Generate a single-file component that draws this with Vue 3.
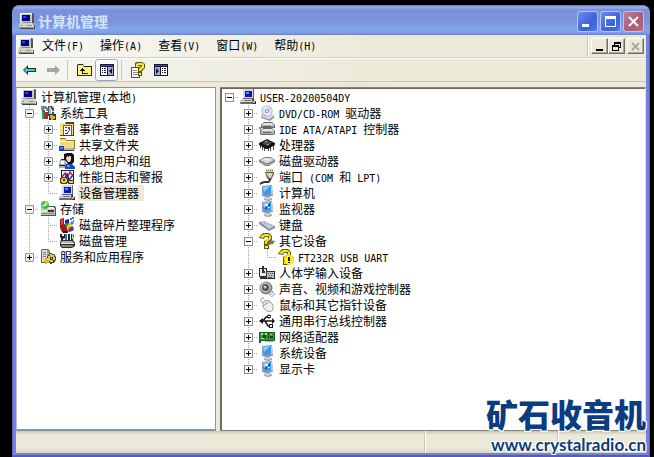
<template>
  <div class="desktop">
    <svg class="sprite" aria-hidden="true">
      <symbol id="pc" viewBox="0 0 16 16">
        <path fill="#55554f" d="M3 0h11l1 1v9H3z" />
        <path fill="#c8c8c0" d="M1 0h12v10H1z" />
        <path fill="#fff" d="M1 0h12v1H2v8H1z" />
        <path fill="#00008c" d="M3 2h8v6H3z" />
        <path fill="#2848e0" d="M4 3h3v2H4z" />
        <path fill="#888" d="M4 9h8v1H4z" />
        <path fill="#44443f" d="M2 11h12l2 2v3H1z" />
        <path fill="#d4d4cc" d="M1 10h12l2 2v3H0v-3z" />
        <path fill="#94948c" d="M0 14h14v1H0zM8 12h5v1H8z" />
        <path fill="#20a020" d="M2 12h1v1H2z" />
      </symbol>
      <symbol id="tools" viewBox="0 0 16 16">
        <path fill="#708890" d="M1 1h5l2 2v3H6V4H4v2H2L1 4z" />
        <path fill="#506060" d="M2 5h3v9H2zM9 4h2v5H9z" />
        <path fill="#28a060" d="M2 7h2v7H2z" />
        <path fill="#c82020" d="M5 7h3v7H5z" />
        <path fill="#485858" d="M8 1h4l2 2v3h-2V4h-2v7H8z" />
        <path fill="#a0c8d8" d="M9 2h2v8H9z" />
        <path fill="#383020" d="M9 9h7v6H9z" />
        <path fill="#e0b020" d="M10 10h3v1h2v3h-2v1h-2v-2h-1z" />
        <path fill="#2050b0" d="M12 7h2v2h-2z" />
      </symbol>
      <symbol id="events" viewBox="0 0 16 16">
        <path fill="#4c4420" d="M1 2h5l1-1h8v14H1z" />
        <path fill="#f0e088" d="M1 2h5l1 1h7v11H1z" />
        <path fill="#fff" d="M4 4h9v10H4z" />
        <path fill="#606060" d="M4 4h9v1H5v9H4zM12 5h1v9h-1z" />
        <path fill="#2030a0" d="M6 6h2v1H6zM6 9h2v1H6zM6 12h2v1H6z" />
        <path fill="#a02060" d="M9 6h2v4H9v3H8v-2h2V8H9z" />
      </symbol>
      <symbol id="shared" viewBox="0 0 16 16">
        <path fill="#8c7c20" d="M1 1h5l2 2h8v9H1z" />
        <path fill="#f0dc78" d="M1 2h5l2 2h7v7H1z" />
        <path fill="#fff8b8" d="M1 4h13v1H1z" />
        <path fill="#1840a8" d="M0 9h5v5H0z" />
        <path fill="#404030" d="M5 13h10v1H5z" />
        <path fill="#a8b8c0" d="M5 11h8l3 1v1H5z" />
        <path fill="#4888d8" d="M1 10h3v2H1z" />
      </symbol>
      <symbol id="users" viewBox="0 0 16 16">
        <path fill="#101010" d="M5 1l3-1h5l2 2v7l-2 2H9L7 8H5z" />
        <path fill="#f4d8c0" d="M8 3h4v4l-1 2H9L7 6z" />
        <path fill="#101010" d="M9 3h1v1H9z" />
        <path fill="#a8b8b8" d="M1 7h5l2 4v4H0v-4z" />
        <path fill="#202020" d="M0 12h6v1H0zM2 6h4v1H2z" />
        <path fill="#fff" d="M2 8h3v3H2z" />
        <path fill="#1848c0" d="M7 11h6l3 3v2H6v-3z" />
        <path fill="#50a0e8" d="M8 12h3v2H8z" />
      </symbol>
      <symbol id="perf" viewBox="0 0 16 16">
        <path fill="#202020" d="M2 1h13v13H2z" />
        <path fill="#fff" d="M3 2h11v11H3z" />
        <path fill="none" stroke="#b02070" stroke-width="1.5" d="M3 8l3-4 2 5 3-6 3 4" />
        <path fill="none" stroke="#2030a0" stroke-width="1.5" d="M5 11l3-6 2 6 4-5" />
        <path fill="#504010" d="M2 8h6v1h1v5H8v1H2v-1H1V9h1z" />
        <path fill="#e8c848" d="M3 9h4v1h1v3H7v1H3v-1H2v-3h1z" />
        <path fill="#403808" d="M4 10h2v2H4zM9 11h6v4H9z" />
        <path fill="#e8d060" d="M10 12h4v2h-4z" />
      </symbol>
      <symbol id="device" viewBox="0 0 16 16">
        <path fill="#606070" d="M3 0h11v10H3z" />
        <path fill="#d8d8e0" d="M3 0h10v9H3z" />
        <path fill="#0818b0" d="M5 2h7v6H5z" />
        <path fill="#6090f0" d="M6 3h3v2H6z" />
        <path fill="#686870" d="M1 11h12l3 4H0z" />
        <path fill="#d8d8d0" d="M2 10h10l2 3H1z" />
        <path fill="#707070" d="M4 11h7v1H4z" />
        <path fill="#303030" d="M12 10h2v2h2v3h-3z" />
        <path fill="#b8b8a8" d="M13 12h2v2h-2z" />
      </symbol>
      <symbol id="storage" viewBox="0 0 16 16">
        <path fill="#505050" d="M1 7l3-2h11l1 2v8H1z" />
        <path fill="#c4c4bc" d="M1 7h14v7H1z" />
        <path fill="#f0f0e8" d="M2 6h12v2H2z" />
        <circle cx="5" cy="4" r="4" fill="#48b850" />
        <path fill="#d8e850" d="M5 0l4 3-4 1z" />
        <path fill="#80d8e0" d="M1 4h4l-2 3z" />
        <path fill="#fff" d="M4 3h2v2H4z" />
        <path fill="#383838" d="M8 9h6v2H8z" />
        <path fill="#888" d="M2 12h12v1H2z" />
        <path fill="#e8e8e0" d="M2 9h5v2H2z" />
      </symbol>
      <symbol id="defrag" viewBox="0 0 16 16">
        <path fill="#a01818" d="M1 2l4-1v6l3 1v6l-4 1-3-4z" />
        <path fill="#e84848" d="M2 3l2-1v5L2 8z" />
        <path fill="#1828a0" d="M6 3l4-1v5H6z" />
        <path fill="#18a038" d="M6 6h4v4l-3 1z" />
        <path fill="#e8d020" d="M8 9l3-3 2 2-3 5H8z" />
        <path fill="#803080" d="M11 10l3-1 1 4-4 2-3-1z" />
        <path fill="#4080e0" d="M11 6l2-2 2 2-2 2z" />
        <path fill="#d040a0" d="M11 1h2v2h-2zM14 3h1v2h-1z" />
        <path fill="#20a060" d="M13 0h2v2h-2z" />
        <path fill="#301818" d="M1 12l3 2h5v2H4z" />
      </symbol>
      <symbol id="diskmgmt" viewBox="0 0 16 16">
        <path fill="#202020" d="M1 1h2v2h2V1h1v4L4 6v3H2V5L1 4zM9 1h2v6H9zM12 1l3 1-1 5h-2z" />
        <path fill="#2870c0" d="M6 1h2v6H6z" />
        <path fill="#c8d8e0" d="M13 2h1v4h-1z" />
        <path fill="#303030" d="M2 7h12l2 3v3l-3 2H3l-2-2v-4z" />
        <path fill="#b4b4ac" d="M3 8h10l2 2H1z" />
        <path fill="#e4e4dc" d="M2 10h13v1H2z" />
        <path fill="#888880" d="M2 12h12v1l-1 1H3z" />
        <path fill="#20d040" d="M3 12h2v1H3z" />
      </symbol>
      <symbol id="services" viewBox="0 0 16 16">
        <path fill="#686860" d="M2 0h6l2 2v12H1V1z" />
        <path fill="#d8d8d0" d="M2 1h5v12H2z" />
        <path fill="#a0a098" d="M7 1l2 1v11H7z" />
        <path fill="#808080" d="M3 3h3v1H3zM3 5h3v1H3zM3 7h3v1H3z" />
        <path fill="#504818" d="M10 4h2v1h2l2 3v3l-2 3h-2v1h-2v-1H8l-1-3V8l1-2h2z" />
        <path fill="#d8c870" d="M10 5h2v1h2v2h1v3h-2v2h-3v-1H8V7h2z" />
        <path fill="#403810" d="M10 8h3v3h-3z" />
        <path fill="#fff" d="M11 9h1v1h-1z" />
        <path fill="#e0b828" d="M5 9h3v2h1v3H7v1H5v-2H4v-2h1z" />
      </symbol>
      <symbol id="cd" viewBox="0 0 16 16">
        <path fill="#9898a0" d="M3 9l10 0 3 3-5 4L2 13z" />
        <path fill="#dcdce0" d="M4 9h9l2 2-5 3-7-2z" />
        <circle cx="8" cy="6" r="5.5" fill="#9098b8" />
        <circle cx="8" cy="6" r="5" fill="#d8e0f4" />
        <path fill="#f4f4ff" d="M8 6L4 3l3-2zM8 6l4 3-3 2z" />
        <circle cx="8" cy="6" r="2" fill="#8890b8" />
        <circle cx="8" cy="6" r="1" fill="#fff" />
      </symbol>
      <symbol id="ide" viewBox="0 0 16 16">
        <path fill="#686868" d="M2 4l3-3h8l3 3v3H2zM1 10l3-3h9l3 3v3l-2 1H2l-1-1z" />
        <path fill="#e4e4e4" d="M5 2h8l2 2H3zM4 8h9l2 2H2z" />
        <path fill="#b4b4b4" d="M3 4h12v2H3zM2 10h13v3H2z" />
        <path fill="#606060" d="M4 5h8v1H4zM4 11h8v1H4z" />
        <path fill="#888" d="M0 6h2v6H1V8H0z" />
      </symbol>
      <symbol id="cpu" viewBox="0 0 16 16">
        <path fill="#444" d="M1 8h1v3H1zM3 9h1v4H3zM5 10h1v4H5zM9 10h1v4H9zM11 9h1v5h-1zM14 8h1v5h-1z" />
        <path fill="#161616" d="M0 6l8-4 8 4v2l-7 4H7L0 8z" />
        <path fill="#4c4c4c" d="M3 6l5-3 5 3-5 3z" />
        <path fill="#999" d="M6 4h2v1H6zM8 7h2v1H8z" />
      </symbol>
      <symbol id="disk" viewBox="0 0 16 16">
        <path fill="#808080" d="M0 7l6-3h6l4 3v2l-6 4H6L0 9z" />
        <path fill="#dcdcdc" d="M1 7l5-2h6l3 2-6 3H7z" />
        <path fill="#a8a8a8" d="M1 8l6 3h3l5-3v1l-5 3H6L1 9z" />
        <path fill="#f8f8f8" d="M5 6h4v1H5z" />
      </symbol>
      <symbol id="port" viewBox="0 0 16 16">
        <path fill="#e8e038" d="M7 0h7v3H7z" />
        <path fill="#908018" d="M7 1h1v1H7zM9 1h1v1H9zM11 1h1v1h-1zM13 1h1v1h-1z" />
        <path fill="#555" d="M6 3h9v2l-2 4-1 2h-2L8 9z" />
        <path fill="#d4d4d4" d="M7 4h7l-2 5h-2z" />
        <path fill="none" stroke="#333" stroke-width="2" d="M11 10c0 4-3 3-5 3s-3 1-5 2" />
      </symbol>
      <symbol id="screen" viewBox="0 0 16 16">
        <path fill="#8898b4" d="M3 1l10-1 1 11-8 1-3-1z" />
        <path fill="#3898e8" d="M4 2l8-1v8l-7 1z" />
        <path fill="#90d0ff" d="M4 2l7-1-6 6z" />
        <path fill="#c4ccd8" d="M12 1h1l1 9-2-1z" />
        <path fill="#989ca8" d="M7 11h4v2H7z" />
        <ellipse cx="9" cy="14" rx="4" ry="1.8" fill="#9498a4" />
        <ellipse cx="9" cy="13.5" rx="3" ry="1" fill="#dcdce4" />
      </symbol>
      <symbol id="monitor" viewBox="0 0 16 16">
        <use href="#screen" />
        <path fill="#e8f4ff" d="M6 3h3v2H6zM9 6h2v1H9z" />
        <path fill="#1858a8" d="M9 3h2v2H9zM6 6h2v2H6z" />
      </symbol>
      <symbol id="keyboard" viewBox="0 0 16 16">
        <path fill="#888ca8" d="M0 5l5-1 11 5v2l-6 3L0 7z" />
        <path fill="#d8dcec" d="M1 5l4-1 10 5-5 3z" />
        <path fill="none" stroke="#888ca8" stroke-dasharray="1 1" d="M3 5l9 5M5 5l8 4M2 6l8 5" />
      </symbol>
      <symbol id="unknown" viewBox="0 0 16 16">
        <path fill="#77776c" d="M10 7l6 1-2 3-5 1-2 3 4 1H7l-2-4z" />
        <path fill="#606000" d="M1 3l3-3h6l3 3v4l-4 3v2H5V8l4-2V4H6L5 6 0 5z" />
        <path fill="#f4e818" d="M2 3l3-2h4l3 2v3L8 9v2H6V8l4-3V3H6L4 5 1 4z" />
        <path fill="#606000" d="M5 12h5v4H5z" />
        <path fill="#f4e818" d="M6 13h3v2H6z" />
      </symbol>
      <symbol id="warning" viewBox="0 0 16 16">
        <use href="#unknown" />
        <circle cx="11" cy="11" r="5" fill="#e8d800" />
        <circle cx="11" cy="11" r="4.4" fill="#fff020" />
        <path fill="#181800" d="M10 8h2v4h-2zM10 13h2v1h-2z" />
      </symbol>
      <symbol id="hid" viewBox="0 0 16 16">
        <path fill="#303030" d="M0 3h8v9H0zM8 6h8v8H1v-2h7z" />
        <path fill="#e8e8e8" d="M1 4h6v7H1z" />
        <path fill="#303030" d="M3 1h2v6H3zM5 6h1v2H3V7z" />
        <path fill="#c0c0c0" d="M8 7h7v6H8z" />
        <path fill="#555" d="M9 8h1v1H9zM11 8h1v1h-1zM13 8h1v1h-1zM10 10h1v1h-1zM12 10h1v1h-1zM9 12h4v1H9z" />
      </symbol>
      <symbol id="sound" viewBox="0 0 16 16">
        <circle cx="7" cy="7" r="6.5" fill="#808088" />
        <circle cx="6.5" cy="6.5" r="5" fill="#c4c4cc" />
        <circle cx="6.5" cy="6.5" r="3.5" fill="#505058" />
        <circle cx="6" cy="6" r="1.5" fill="#c8c8d0" />
        <path fill="none" stroke="#888" d="M10 14c2 0 3-1 4-4M12 16c2-1 3-2 3.5-4" />
      </symbol>
      <symbol id="mouse" viewBox="0 0 16 16">
        <path fill="none" stroke="#888" d="M5 6C0 5 1 1 5 1" />
        <ellipse cx="9" cy="9" rx="5" ry="6.5" fill="#888" transform="rotate(-35 9 9)" />
        <ellipse cx="9" cy="9" rx="4.3" ry="5.8" fill="#f0f0ec" transform="rotate(-35 9 9)" />
        <path fill="none" stroke="#999" d="M4 9l6-4M6 5l2 2" />
      </symbol>
      <symbol id="usb" viewBox="0 0 16 16">
        <path fill="none" stroke="#181818" stroke-width="1.5" d="M1 8h13M4 8l3-4h3M6 8l3 5h2" />
        <path fill="#181818" d="M0 8l4-3v6zM16 8l-3-3v6z" />
        <circle cx="10" cy="3.5" r="2" fill="#181818" />
        <path fill="#181818" d="M10 11h4v4h-4z" />
        <path fill="#fff" d="M11 12h2v2h-2zM9 3h2v1H9z" />
      </symbol>
      <symbol id="network" viewBox="0 0 16 16">
        <path fill="#206020" d="M0 3h16v9H2v2H0z" />
        <path fill="#30983c" d="M1 4h14v7H1z" />
        <path fill="#a0e070" d="M2 4h2v2H2zM6 4h2v2H6zM11 5h2v1h-2zM2 9h3v1H2z" />
        <path fill="#104810" d="M4 6h3v3H4zM9 4h1v6H9zM11 7h3v2h-3z" />
        <path fill="#d0b830" d="M6 12h8v1H6z" />
      </symbol>
      <symbol id="back" viewBox="0 0 16 16">
        <path fill="#202828" d="M1 8l5-5v3h8v4H6v3z" />
        <path fill="#38d0d0" d="M2 8l3-3v2h8v2H5v2z" />
      </symbol>
      <symbol id="forward" viewBox="0 0 16 16">
        <path fill="#a8a89c" d="M15 8l-5-5v3H2v4h8v3z" />
      </symbol>
      <symbol id="up" viewBox="0 0 16 16">
        <path fill="#282818" d="M1 3l1-1h5l1 2h8v10H1z" />
        <path fill="#fcf080" d="M2 3h5l1 2h7v8H2z" />
        <path fill="#181818" d="M6 6h1v1h1v1h1v1H7v2h5v1H6V9H4V8h1V7h1z" />
      </symbol>
      <symbol id="treepane" viewBox="0 0 16 16">
        <path fill="#181848" d="M1 2h14v12H1z" />
        <path fill="#fff" d="M2 5h6v8H2z" />
        <path fill="#a8a8d8" d="M9 5h5v8H9z" />
        <path fill="#181818" d="M3 6h1v1H3zM5 6h2v1H5zM3 8h1v1H3zM5 8h2v1H5zM3 10h1v1H3zM5 10h2v1H5zM10 9l3-3v6z" />
        <path fill="#4048b0" d="M2 3h12v1H2z" />
      </symbol>
      <symbol id="props" viewBox="0 0 16 16">
        <path fill="#505050" d="M1 5h9v11H1z" />
        <path fill="#fff" d="M2 6h7v9H2z" />
        <path fill="#888" d="M3 8h4v1H3zM3 10h5v1H3zM3 12h5v1H3z" />
        <path fill="#5c5800" d="M5 1l2-1h5l3 2v4l-3 3v1H8V6l3-2H8v2H5z" />
        <path fill="#f4e840" d="M6 2l2-1h4l2 1v4l-3 2v1H9V7l3-3V3H8v2H6z" />
        <path fill="#5c5800" d="M8 10h4v4H8z" />
        <path fill="#f4e840" d="M9 11h2v2H9z" />
      </symbol>
      <symbol id="listpane" viewBox="0 0 16 16">
        <path fill="#181848" d="M1 2h14v12H1z" />
        <path fill="#a8a8d8" d="M2 5h5v8H2z" />
        <path fill="#fff" d="M8 5h6v8H8z" />
        <path fill="#181818" d="M9 6h1v1H9zM11 6h2v1h-2zM9 8h1v1H9zM11 8h2v1h-2zM9 10h1v1H9zM11 10h2v1h-2zM6 9L3 6v6z" />
        <path fill="#4048b0" d="M2 3h12v1H2z" />
      </symbol>
      <symbol id="win-min" viewBox="0 0 11 11"><path d="M0 8h7v3H0z" /></symbol>
      <symbol id="win-max" viewBox="0 0 11 11"><path fill-rule="evenodd" d="M0 0h11v11H0zM1 3v7h9V3z" /></symbol>
      <symbol id="win-close" viewBox="0 0 11 11">
        <path fill="none" stroke="currentColor" stroke-width="2" d="M1 1l9 9M10 1l-9 9" />
      </symbol>
      <symbol id="mdi-min" viewBox="0 0 9 9"><path d="M1 7h7v2H1z" /></symbol>
      <symbol id="mdi-restore" viewBox="0 0 9 9">
        <path fill-rule="evenodd" d="M2 0h7v6H7v3H0V3h2zM3 2v1h4v2h1V2zM1 5v3h5V5z" />
      </symbol>
      <symbol id="mdi-close" viewBox="0 0 9 9">
        <path fill="none" stroke="currentColor" stroke-width="2" d="M1 1l7 7M8 1L1 8" />
      </symbol>
    </svg>

    <main class="window">
      <header class="title-bar">
        <svg class="icon"><use href="#pc" /></svg>
        <h1 class="title">计算机管理</h1>
        <button type="button" class="caption-button" aria-label="最小化"><svg><use href="#win-min" /></svg></button>
        <button type="button" class="caption-button" aria-label="最大化"><svg><use href="#win-max" /></svg></button>
        <button type="button" class="caption-button close" aria-label="关闭"><svg><use href="#win-close" /></svg></button>
      </header>

      <nav class="menu-bar">
        <svg class="icon"><use href="#pc" /></svg>
        <button v-for="menu in menus" :key="menu.key" type="button" class="menu">
          {{ menu.name }}<span class="latin">({{ menu.key }})</span>
        </button>
        <div class="mdi-buttons">
          <button type="button" class="mdi-button" aria-label="最小化"><svg><use href="#mdi-min" /></svg></button>
          <button type="button" class="mdi-button" aria-label="还原"><svg><use href="#mdi-restore" /></svg></button>
          <button type="button" class="mdi-button disabled" aria-label="关闭" disabled><svg><use href="#mdi-close" /></svg></button>
        </div>
      </nav>

      <div class="toolbar">
        <template v-for="(tool, i) in tools" :key="i">
          <span v-if="tool === null" class="separator"></span>
          <button
            v-else
            type="button"
            class="tool"
            :class="{ pressed: tool.pressed }"
            :aria-label="tool.label"
            :disabled="tool.disabled"
          >
            <svg class="icon"><use :href="'#' + tool.icon" /></svg>
          </button>
        </template>
      </div>

      <div class="panes">
        <section v-for="pane in panes" :key="pane.name" class="pane" :class="pane.name">
          <ul class="tree">
            <li v-for="row in pane.rows" :key="row.node.label" class="row">
              <span v-for="(guide, i) in row.guides" :key="i" class="guide" :class="guide">
                <button
                  v-if="i === row.guides.length - 1 && row.node.open !== undefined"
                  type="button"
                  class="expander"
                  :class="{ collapsed: !row.node.open }"
                  :aria-label="row.node.label"
                  :aria-expanded="row.node.open"
                  @click="toggle(row.node)"
                ></button>
              </span>
              <svg class="icon"><use :href="'#' + row.node.icon" /></svg>
              <span class="label" :class="{ selected: row.node.label === selected }" @click="selected = row.node.label">
                <span v-for="(run, i) in splitRuns(row.node.label)" :key="i" :class="{ latin: run.latin }">{{ run.text }}</span>
              </span>
            </li>
          </ul>
        </section>
      </div>

      <footer class="status-bar">
        <span class="status main"></span>
        <span class="status"></span>
        <span class="status"></span>
      </footer>
    </main>

    <div class="watermark">
      <div class="brand">矿石收音机</div>
      <a class="site" href="#">www.crystalradio.cn</a>
    </div>
  </div>
</template>

<script setup>
import { computed, reactive, ref } from 'vue'

const menus = [
  { name: '文件', key: 'F' },
  { name: '操作', key: 'A' },
  { name: '查看', key: 'V' },
  { name: '窗口', key: 'W' },
  { name: '帮助', key: 'H' },
]

// null is a separator
const tools = [
  { icon: 'back', label: '后退' },
  { icon: 'forward', label: '前进', disabled: true },
  null,
  { icon: 'up', label: '向上' },
  { icon: 'treepane', label: '显示控制台树', pressed: true },
  null,
  { icon: 'props', label: '属性' },
  { icon: 'listpane', label: '显示操作窗格' },
]

const selected = ref('设备管理器')

const consoleTree = reactive({
  label: '计算机管理(本地)',
  icon: 'pc',
  children: [
    {
      label: '系统工具',
      icon: 'tools',
      open: true,
      children: [
        { label: '事件查看器', icon: 'events', open: false },
        { label: '共享文件夹', icon: 'shared', open: false },
        { label: '本地用户和组', icon: 'users', open: false },
        { label: '性能日志和警报', icon: 'perf', open: false },
        { label: '设备管理器', icon: 'device' },
      ],
    },
    {
      label: '存储',
      icon: 'storage',
      open: true,
      children: [
        { label: '磁盘碎片整理程序', icon: 'defrag' },
        { label: '磁盘管理', icon: 'diskmgmt' },
      ],
    },
    { label: '服务和应用程序', icon: 'services', open: false },
  ],
})

const deviceTree = reactive({
  label: 'USER-20200504DY',
  icon: 'device',
  open: true,
  children: [
    { label: 'DVD/CD-ROM 驱动器', icon: 'cd', open: false },
    { label: 'IDE ATA/ATAPI 控制器', icon: 'ide', open: false },
    { label: '处理器', icon: 'cpu', open: false },
    { label: '磁盘驱动器', icon: 'disk', open: false },
    { label: '端口 (COM 和 LPT)', icon: 'port', open: false },
    { label: '计算机', icon: 'screen', open: false },
    { label: '监视器', icon: 'monitor', open: false },
    { label: '键盘', icon: 'keyboard', open: false },
    {
      label: '其它设备',
      icon: 'unknown',
      open: true,
      children: [{ label: 'FT232R USB UART', icon: 'warning' }],
    },
    { label: '人体学输入设备', icon: 'hid', open: false },
    { label: '声音、视频和游戏控制器', icon: 'sound', open: false },
    { label: '鼠标和其它指针设备', icon: 'mouse', open: false },
    { label: '通用串行总线控制器', icon: 'usb', open: false },
    { label: '网络适配器', icon: 'network', open: false },
    { label: '系统设备', icon: 'screen', open: false },
    { label: '显示卡', icon: 'monitor', open: false },
  ],
})

const panes = computed(() => [
  { name: 'console', rows: flatten(consoleTree, [], []) },
  { name: 'devices', rows: flatten(deviceTree, ['root'], ['blank']) },
])

// guides are the cells left of the icon, inherited is what the children repeat
function flatten(node, guides, inherited) {
  const rows = [{ node, guides }]
  if (node.open === false || !node.children) return rows

  node.children.forEach((child, i) => {
    const last = i === node.children.length - 1
    rows.push(
      ...flatten(
        child,
        [...inherited, last ? 'elbow' : 'tee'],
        [...inherited, last ? 'blank' : 'line']
      )
    )
  })
  return rows
}

function toggle(node) {
  node.open = !node.open
}

function splitRuns(label) {
  return label
    .split(/([\x20-\x7e]+)/)
    .filter(Boolean)
    .map((text) => ({ text, latin: /^[\x20-\x7e]/.test(text) }))
}
</script>

<style>
body {
  background: #000;
}
</style>

<style scoped>
.desktop {
  position: relative;
  display: flex;
  box-sizing: border-box;
  min-height: 100vh;
  padding: 5px 4px 0 12px;
  background: #000;
  color: #000;
  font-family: "Noto Sans CJK SC", sans-serif;
  font-size: 12px;
  line-height: 16px;
}

.sprite {
  display: none;
}

button {
  box-sizing: border-box;
  margin: 0;
  padding: 0;
  border: 0;
  background: none;
  color: inherit;
  font: inherit;
}

.icon {
  flex: none;
  width: 16px;
  height: 16px;
}

.latin {
  font-family: "DejaVu Sans Mono", monospace;
  font-size: 10px;
  white-space: pre;
}

.window {
  flex: 1;
  display: flex;
  flex-direction: column;
  min-width: 0;
  border-radius: 8px 8px 0 0;
  padding: 0 4px 4px;
  background: #7482d8;
  box-shadow: inset 1px 0 #565fc0, inset -1px 0 #565fc0, inset 0 -2px #5558c4;
  overflow: hidden;
}

.title-bar {
  display: flex;
  align-items: center;
  gap: 2px;
  box-sizing: border-box;
  height: 30px;
  margin: 0 -4px;
  padding: 2px 6px 0 7px;
  background: linear-gradient(#5c70c4 0, #9aaeec 2px, #7b90dc 5px, #7a94de 16px, #82a6ec 25px, #7e9ce4 28px, #6c7ecc 30px);
}

.title {
  flex: 1;
  margin: 0;
  padding-left: 1px;
  color: #d6e2fa;
  font-size: 14px;
  font-weight: 700;
  line-height: 20px;
}

.caption-button {
  display: flex;
  align-items: center;
  justify-content: center;
  width: 21px;
  height: 21px;
  border: 1px solid #b4c6f6;
  border-radius: 3px;
  background: linear-gradient(135deg, #6c8cee, #3c62dc 60%, #4c74ea);
  color: #fff;
}

.caption-button svg {
  width: 11px;
  height: 11px;
  fill: currentColor;
}

.caption-button.close {
  background: linear-gradient(135deg, #bc8098, #a85c78 60%, #b46c84);
}

.menu-bar {
  display: flex;
  align-items: center;
  height: 22px;
  padding-left: 2px;
  border-bottom: 1px solid #d4d0c0;
  background: linear-gradient(to right, #f8f8f6, #ece9d8 60%);
}

.menu {
  padding: 0 8px;
  line-height: 20px;
  white-space: nowrap;
}

.mdi-buttons {
  display: flex;
  align-items: center;
  align-self: stretch;
  margin-left: auto;
  padding: 0 2px 0 3px;
  border-left: 1px solid #cac6b6;
  box-shadow: inset 1px 0 #fff;
}

.mdi-button {
  display: flex;
  align-items: center;
  justify-content: center;
  width: 17px;
  height: 16px;
  border: 1px solid;
  border-color: #fff #716f64 #716f64 #fff;
  background: #ece9d8;
  box-shadow: inset -1px -1px #aca899;
}

.mdi-button svg {
  width: 9px;
  height: 9px;
  fill: currentColor;
}

.mdi-button.disabled {
  margin-left: 2px;
  color: #aca899;
}

.toolbar {
  display: flex;
  align-items: center;
  height: 22px;
  padding-left: 2px;
  border-top: 1px solid #fff;
  border-bottom: 1px solid #cbc7b6;
  background: linear-gradient(to right, #f6f6f2, #ece9d8 60%);
}

.tool {
  display: flex;
  align-items: center;
  justify-content: center;
  width: 23px;
  height: 22px;
  border: 1px solid transparent;
  border-radius: 3px;
}

.tool.pressed {
  border-color: #98a8c8;
  background: #fcfcfc;
}

.separator {
  width: 1px;
  height: 20px;
  margin: 0 4px 0 3px;
  background: #ccc9b8;
}

.panes {
  flex: 1;
  display: grid;
  grid-template-columns: 200px 1fr;
  gap: 4px;
  padding-top: 5px;
  background: #ece9d8;
}

.pane {
  min-width: 0;
  background: #fff;
}

.console {
  border: 1px solid #8296a4;
  border-bottom-width: 2px;
  border-left-color: #b4c0c8;
}

.devices {
  border: 1px solid #848274;
  border-left: 0;
  border-right-color: #e4e0d0;
  box-shadow: inset 2px 1px #6c6a60;
}

.tree {
  margin: 0;
  padding: 1px 0 0;
  list-style: none;
}

.console .tree {
  padding-left: 3px;
}

.row {
  display: flex;
  height: 16px;
  white-space: nowrap;
}

.row .icon {
  margin: 0 3px 0 1px;
}

.guide {
  flex: none;
  display: grid;
  place-items: center;
  width: 19px;
  height: 16px;
  --dots-v: repeating-linear-gradient(#a4a4a4 0 1px, transparent 1px 2px);
  --dots-h: repeating-linear-gradient(to right, #a4a4a4 0 1px, transparent 1px 2px);
  background-repeat: no-repeat;
}

.guide.root {
  background-image: var(--dots-h);
  background-size: 10px 1px;
  background-position: 9px 8px;
}

.guide.line {
  background-image: var(--dots-v);
  background-size: 1px 16px;
  background-position: 9px 0;
}

.guide.tee {
  background-image: var(--dots-v), var(--dots-h);
  background-size: 1px 16px, 10px 1px;
  background-position: 9px 0, 9px 8px;
}

.guide.elbow {
  background-image: var(--dots-v), var(--dots-h);
  background-size: 1px 8px, 10px 1px;
  background-position: 9px 0, 9px 8px;
}

.expander {
  width: 9px;
  height: 9px;
  border: 1px solid #8496a8;
  background: linear-gradient(#000, #000) center / 5px 1px no-repeat, #fff;
}

.expander.collapsed {
  background:
    linear-gradient(#000, #000) center / 5px 1px no-repeat,
    linear-gradient(#000, #000) center / 1px 5px no-repeat,
    #fff;
}

.console .expander {
  border-radius: 1px;
  background-color: #f0f0ec;
}

.devices .expander {
  border-color: #8c8c8c;
}

.label {
  padding: 0 5px 0 1px;
  height: 16px;
  cursor: default;
}

.label.selected {
  background: #ece9d8;
}

.status-bar {
  display: flex;
  height: 22px;
  background: linear-gradient(#c8c4b4, #ece9d8 4px, #ece9d8 17px, #d8d6c4);
}

.status {
  width: 132px;
  border-right: 1px solid #cbc7b6;
  box-shadow: 1px 0 #fff;
}

.status.main {
  flex: 1;
}

.status:last-child {
  width: 88px;
  border: 0;
  box-shadow: none;
}

.watermark {
  position: absolute;
  right: 8px;
  bottom: 2px;
  color: #0c3c80;
  text-align: right;
  text-shadow: 1px 0 #fff, -1px 0 #fff, 0 1px #fff, 0 -1px #fff, 1px 1px #fff, -1px -1px #fff, 1px -1px #fff, -1px 1px #fff;
}

.brand {
  font-size: 32px;
  font-weight: 900;
  line-height: 32px;
  padding-bottom: 6px;
}

.site {
  display: block;
  color: inherit;
  font-family: Lato, sans-serif;
  font-size: 17px;
  font-weight: 700;
  line-height: 20px;
  text-decoration: none;
}
</style>
